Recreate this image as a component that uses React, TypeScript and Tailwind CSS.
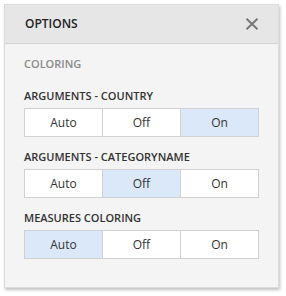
import { useState } from 'react';

type Mode = 'Auto' | 'Off' | 'On';

const modes: Mode[] = ['Auto', 'Off', 'On'];

const Segmented = ({ value, onChange }: { value: Mode; onChange: (m: Mode) => void }) => (
  <div className="mt-1 flex h-[29px] w-[235px] border border-[#d1d1d1] bg-white">
    {modes.map((m, i) => (
      <button
        key={m}
        onClick={() => onChange(m)}
        className={`flex-1 text-[12px] text-[#333] ${i > 0 ? 'border-l border-[#d1d1d1]' : ''} ${
          value === m ? 'bg-[#dae8fa]' : 'bg-white'
        }`}
      >
        {m}
      </button>
    ))}
  </div>
);

export default function App() {
  const [country, setCountry] = useState<Mode>('On');
  const [category, setCategory] = useState<Mode>('Off');
  const [measures, setMeasures] = useState<Mode>('Auto');

  return (
    <div className="h-[296px] w-[286px] bg-white pl-[4px] pt-[4px]" style={{ fontFamily: '"Open Sans", "Noto Sans", sans-serif' }}>
      <div className="flex h-[284px] w-[275px] flex-col border border-[#dcdcdc] bg-[#f4f4f4] shadow-[1px_2px_3px_rgba(0,0,0,0.25)]">
        <div className="flex h-[39px] items-center justify-between border-b border-[#d4d4d4] bg-[#e6e6e6] pl-[20px] pr-[19px]">
          <span className="text-[12px] font-semibold text-[#222]">OPTIONS</span>
          <svg width="14" height="12" viewBox="0 0 14 12" className="text-[#777]">
            <path d="M1.5 0.8 L12.5 11.2 M12.5 0.8 L1.5 11.2" stroke="currentColor" strokeWidth="2" fill="none" />
          </svg>
        </div>
        <div className="flex flex-col px-[19px] pt-[12px]">
          <div className="h-[16px] text-[11px] font-semibold leading-[16px] text-[#8a8a8a]">COLORING</div>
          <div className="mt-[16px] h-[16px] text-[11px] font-semibold leading-[16px] text-[#333]">ARGUMENTS - COUNTRY</div>
          <Segmented value={country} onChange={setCountry} />
          <div className="mt-[12px] h-[16px] text-[11px] font-semibold leading-[16px] text-[#333]">ARGUMENTS - CATEGORYNAME</div>
          <Segmented value={category} onChange={setCategory} />
          <div className="mt-[12px] h-[16px] text-[11px] font-semibold leading-[16px] text-[#333]">MEASURES COLORING</div>
          <Segmented value={measures} onChange={setMeasures} />
        </div>
      </div>
    </div>
  );
}
